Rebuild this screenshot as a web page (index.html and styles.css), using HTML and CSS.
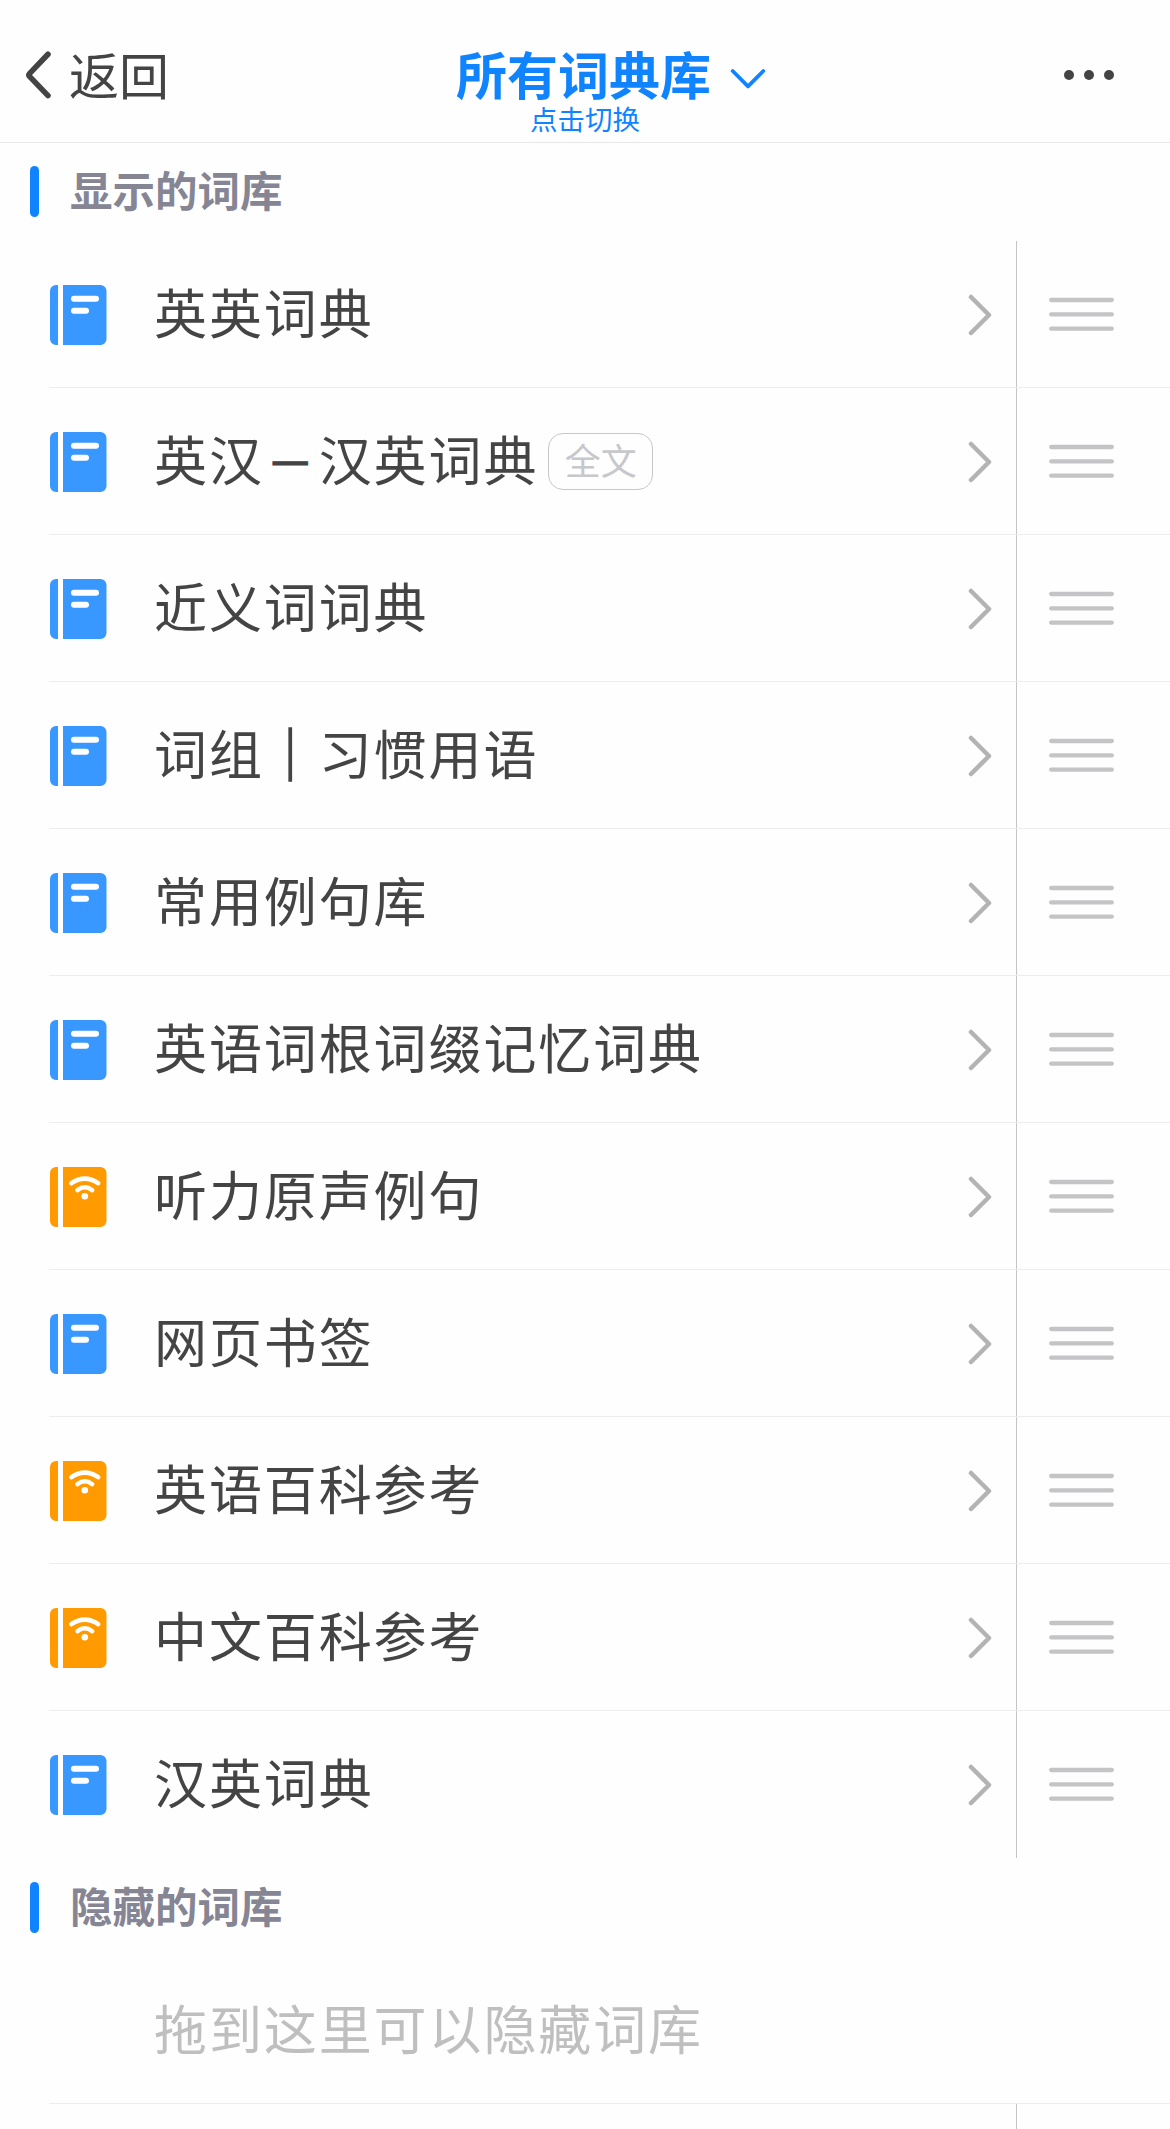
FILE: index.html
```
<!DOCTYPE html>
<html lang="zh-CN">
<head>
<meta charset="utf-8">
<title>所有词典库</title>
<link rel="stylesheet" href="styles.css">
</head>
<body>
<svg class="defs" width="0" height="0" aria-hidden="true">
  <symbol id="book" viewBox="0 0 57 60">
    <path fill="currentColor" d="M8 0H6A6 6 0 0 0 0 6V54A6 6 0 0 0 6 60H8ZM13 0H50.5A6 6 0 0 1 56.5 6V54A6 6 0 0 1 50.5 60H13Z"/>
    <path d="M24 13.7H46M24 25.7H36" stroke="#fff" stroke-width="6" stroke-linecap="round"/>
  </symbol>
  <symbol id="book-online" viewBox="0 0 57 60">
    <path fill="currentColor" d="M8 0H6A6 6 0 0 0 0 6V54A6 6 0 0 0 6 60H8ZM13 0H50.5A6 6 0 0 1 56.5 6V54A6 6 0 0 1 50.5 60H13Z"/>
    <path d="M21.4 16.2Q34.8 7 48.2 16.2M27.4 23.2Q34.8 17.4 42.2 23.2" fill="none" stroke="#fff" stroke-width="4.5" stroke-linecap="round"/>
    <circle cx="34.8" cy="29.3" r="3.3" fill="#fff"/>
  </symbol>
  <symbol id="chevron" viewBox="0 0 24 42">
    <path d="M3 3L21 21L3 39" fill="none" stroke="#b3b3b3" stroke-width="4.5" stroke-linecap="round" stroke-linejoin="round"/>
  </symbol>
  <symbol id="handle" viewBox="0 0 66 34">
    <path d="M2.2 3H62.8M2.2 17.4H62.8M2.2 31.7H62.8" stroke="#c4c4c6" stroke-width="4.3" stroke-linecap="round"/>
  </symbol>
</svg>

<header class="topbar">
  <div class="back">
    <svg width="28" height="50" viewBox="0 0 28 50"><path d="M23 4.2L4.5 23.6Q3.2 25 4.5 26.4L23 45.6" fill="none" stroke="#444" stroke-width="5.6" stroke-linecap="round" stroke-linejoin="round"/></svg>
    <span class="back-label">返回</span>
  </div>
  <div class="switcher">
    <div class="title"><span class="title-label">所有词典库</span><svg width="36" height="22" viewBox="0 0 36 22"><path d="M2.7 3L18 18.3L33.3 3" fill="none" stroke="#1084ff" stroke-width="3.8" stroke-linecap="round" stroke-linejoin="round"/></svg></div>
    <div class="subtitle">点击切换</div>
  </div>
  <div class="more"><i></i><i></i><i></i></div>
</header>

<h2 class="section">显示的词库</h2>
<ul class="list">
  <li class="row"><svg class="book"><use href="#book"/></svg><div class="name">英英词典</div><svg class="chevron"><use href="#chevron"/></svg><div class="drag"><svg><use href="#handle"/></svg></div></li>
  <li class="row"><svg class="book"><use href="#book"/></svg><div class="name">英汉<span class="dash">－</span>汉英词典</div><span class="badge">全文</span><svg class="chevron"><use href="#chevron"/></svg><div class="drag"><svg><use href="#handle"/></svg></div></li>
  <li class="row"><svg class="book"><use href="#book"/></svg><div class="name">近义词词典</div><svg class="chevron"><use href="#chevron"/></svg><div class="drag"><svg><use href="#handle"/></svg></div></li>
  <li class="row"><svg class="book"><use href="#book"/></svg><div class="name">词组<span class="pipe">｜</span>习惯用语</div><svg class="chevron"><use href="#chevron"/></svg><div class="drag"><svg><use href="#handle"/></svg></div></li>
  <li class="row"><svg class="book"><use href="#book"/></svg><div class="name">常用例句库</div><svg class="chevron"><use href="#chevron"/></svg><div class="drag"><svg><use href="#handle"/></svg></div></li>
  <li class="row"><svg class="book"><use href="#book"/></svg><div class="name">英语词根词缀记忆词典</div><svg class="chevron"><use href="#chevron"/></svg><div class="drag"><svg><use href="#handle"/></svg></div></li>
  <li class="row"><svg class="book online"><use href="#book-online"/></svg><div class="name">听力原声例句</div><svg class="chevron"><use href="#chevron"/></svg><div class="drag"><svg><use href="#handle"/></svg></div></li>
  <li class="row"><svg class="book"><use href="#book"/></svg><div class="name">网页书签</div><svg class="chevron"><use href="#chevron"/></svg><div class="drag"><svg><use href="#handle"/></svg></div></li>
  <li class="row"><svg class="book online"><use href="#book-online"/></svg><div class="name">英语百科参考</div><svg class="chevron"><use href="#chevron"/></svg><div class="drag"><svg><use href="#handle"/></svg></div></li>
  <li class="row"><svg class="book online"><use href="#book-online"/></svg><div class="name">中文百科参考</div><svg class="chevron"><use href="#chevron"/></svg><div class="drag"><svg><use href="#handle"/></svg></div></li>
  <li class="row last"><svg class="book"><use href="#book"/></svg><div class="name">汉英词典</div><svg class="chevron"><use href="#chevron"/></svg><div class="drag"><svg><use href="#handle"/></svg></div></li>
</ul>

<h2 class="section section-hidden">隐藏的词库</h2>
<ul class="list">
  <li class="row placeholder"><div class="name">拖到这里可以隐藏词库</div></li>
  <li class="row next"><div class="drag"></div></li>
</ul>
</body>
</html>
```
FILE: styles.css
```
* { box-sizing: border-box; }
body {
  margin: 0;
  background: #fefefe;
  color: #444;
  font-family: "Noto Sans CJK SC", sans-serif;
}
svg { display: block; flex: none; }
.defs { position: absolute; }

.topbar {
  display: grid;
  grid-template-columns: 390px 390px 390px;
  height: 143px;
  border-bottom: 1px solid #e8e8e8;
}
.back {
  display: flex;
  align-items: center;
  height: 150px;
  padding-left: 25px;
}
.back-label {
  margin-left: 16px;
  padding-bottom: 5px;
  font-size: 50px;
  line-height: 60px;
}
.switcher {
  display: flex;
  flex-direction: column;
  align-items: center;
  color: #1084ff;
  white-space: nowrap;
}
.title {
  display: flex;
  align-items: center;
  width: 316px;
  height: 60px;
  margin: 43px 0 0 58px;
  font-size: 51px;
  font-weight: 700;
  line-height: 60px;
}
.title-label { width: 256px; }
.title svg { margin: 12px 0 0 18px; }
.subtitle {
  font-size: 27.5px;
  line-height: 30px;
}
.more {
  display: flex;
  justify-content: flex-end;
  gap: 10px;
  padding: 70px 56px 0 0;
}
.more i {
  width: 10px;
  height: 10px;
  border-radius: 50%;
  background: #444;
}

.section {
  display: flex;
  align-items: center;
  height: 98px;
  margin: 0;
  padding: 0 0 7px 70px;
  color: #858594;
  font-size: 42.5px;
  font-weight: 700;
  line-height: 60px;
}
.section::before {
  content: "";
  width: 9px;
  height: 51px;
  margin: 6px 31px 0 -40px;
  border-radius: 4.5px;
  background: #1084ff;
}
.section-hidden { height: 99px; padding-top: 1px; }

.list { margin: 0; padding: 0; list-style: none; }
.row {
  display: flex;
  align-items: center;
  height: 147px;
  margin-left: 49px;
  border-bottom: 1px solid #ededed;
}
.last { border-bottom-color: transparent; }
.last .drag { margin-bottom: -1px; padding-bottom: 1px; }
.book {
  width: 57px;
  height: 60px;
  margin: 2px 47px 0 1px;
  color: #3898ff;
}
.online { color: #ff9b00; }
.name {
  padding-bottom: 6px;
  font-size: 53px;
  letter-spacing: 1.9px;
  line-height: 70px;
  white-space: nowrap;
}
.dash {
  display: inline-block;
  width: 54.9px;
  font-size: 48px;
  line-height: 60px;
  text-align: center;
  -webkit-text-stroke: 0.8px #444;
}
.pipe { -webkit-text-stroke: 1.5px #444; }
.badge {
  width: 105px;
  height: 57px;
  margin-left: 10px;
  border: 1px solid #c7c7cc;
  border-radius: 15px;
  color: #c7c7cc;
  font-size: 36px;
  line-height: 51px;
  text-align: center;
}
.chevron {
  width: 24px;
  height: 42px;
  margin: 2px 24px 0 auto;
}
.drag {
  display: flex;
  align-items: center;
  align-self: stretch;
  width: 154px;
  padding-left: 32px;
  border-left: 1px solid #c4c4c6;
}
.drag svg { width: 66px; height: 34px; }
.placeholder .name { margin-left: 105px; color: #bfbfbf; }
.next { height: 25px; border-bottom: 0; }
.next .drag { margin-left: auto; }
```
